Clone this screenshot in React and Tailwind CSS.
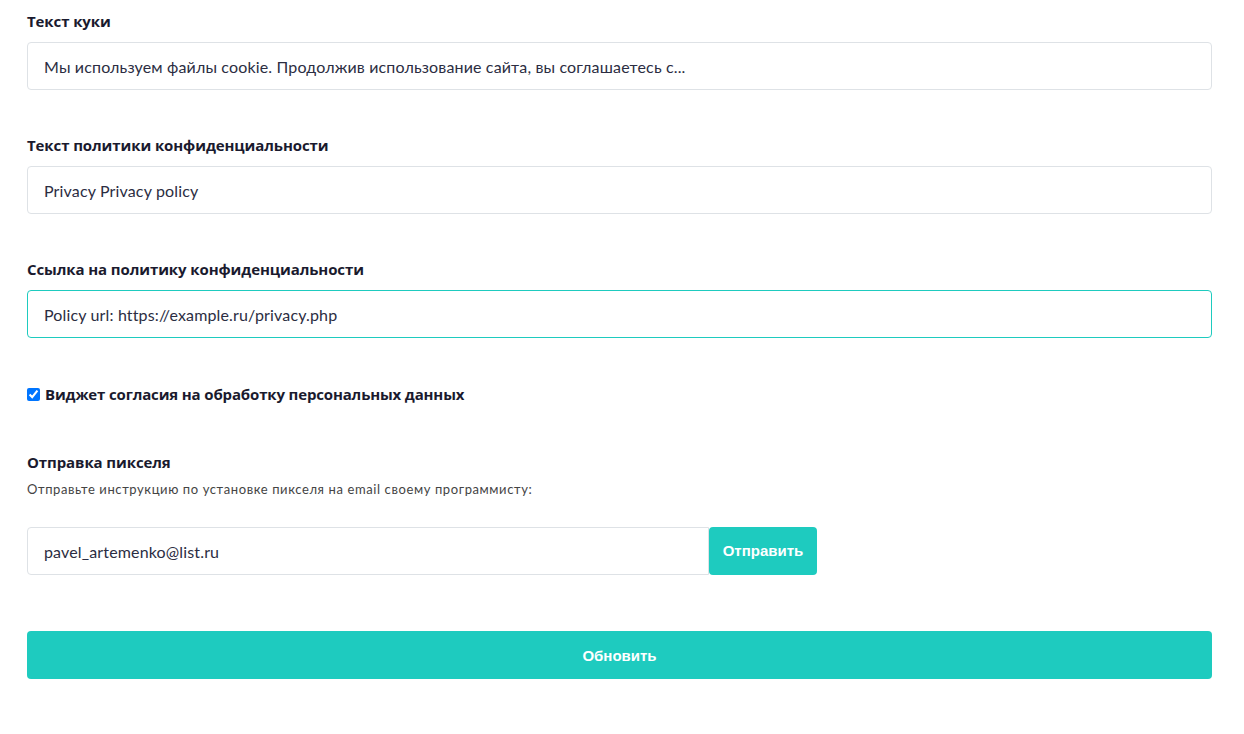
import React, { useState } from "react";

const Field = ({ label, value, focused }) => (
  <div className="flex flex-col">
    <label className="text-[15px] leading-5 font-bold text-[#1a1a2e] mb-[11px] font-['Open_Sans',sans-serif] tracking-[-0.1px]">
      {label}
    </label>
    <input
      type="text"
      defaultValue={value}
      className={`h-12 w-full rounded-[4px] border px-4 text-[16px] tracking-[0.15px] text-[#2b2d42] outline-none ${
        focused ? "border-[#1ecbbf]" : "border-[#dee2e6]"
      }`}
    />
  </div>
);

export default function App() {
  const [checked, setChecked] = useState(true);

  return (
    <div className="min-h-screen bg-white font-['Lato',sans-serif]">
      <div className="w-[1185px] ml-[27px] pt-[11px] flex flex-col">
        <Field
          label="Текст куки"
          value="Мы используем файлы cookie. Продолжив использование сайта, вы соглашаетесь с..."
        />
        <div className="mt-[45px]">
          <Field label="Текст политики конфиденциальности" value="Privacy Privacy policy" />
        </div>
        <div className="mt-[45px]">
          <Field
            label="Ссылка на политику конфиденциальности"
            value="Policy url: https://example.ru/privacy.php"
            focused
          />
        </div>

        <label className="mt-[46px] flex items-center gap-[5px] text-[15px] leading-5 font-bold text-[#1a1a2e] font-['Open_Sans',sans-serif] tracking-[-0.15px]">
          <input
            type="checkbox"
            checked={checked}
            onChange={(e) => setChecked(e.target.checked)}
            className="w-[13px] h-[13px] m-0 accent-[#0075ff]"
          />
          Виджет согласия на обработку персональных данных
        </label>

        <div className="mt-[48px] text-[15px] leading-5 font-bold text-[#1a1a2e] font-['Open_Sans',sans-serif] tracking-[-0.1px]">
          Отправка пикселя
        </div>
        <div className="mt-[9px] text-[13px] leading-4 text-[#444] tracking-[0.6px]">
          Отправьте инструкцию по установке пикселя на email своему программисту:
        </div>

        <div className="mt-[30px] flex">
          <input
            type="text"
            defaultValue="pavel_artemenko@list.ru"
            className="h-12 w-[682px] rounded-l-[4px] border border-[#dee2e6] px-4 text-[16px] tracking-[0.15px] text-[#2b2d42] outline-none"
          />
          <button
            type="button"
            className="h-12 w-[108px] rounded-[4px] bg-[#1ecbbf] text-white text-[15px] font-bold font-['Liberation_Sans',sans-serif]"
          >
            Отправить
          </button>
        </div>

        <button
          type="button"
          className="mt-[56px] h-12 w-full rounded-[4px] bg-[#1ecbbf] text-white text-[15px] font-bold font-['Liberation_Sans',sans-serif] pt-[2px]"
        >
          Обновить
        </button>
      </div>
    </div>
  );
}
